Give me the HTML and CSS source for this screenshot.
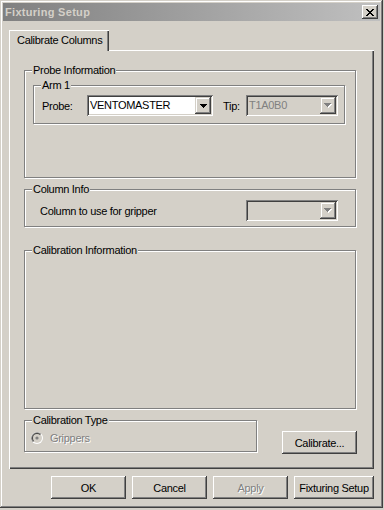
FILE: index.html
```html
<!DOCTYPE html>
<html lang="en">
<head>
  <meta charset="UTF-8">
  <title>Fixturing Setup</title>
  <link rel="stylesheet" href="styles.css">
</head>
<body>
  <div class="window">
    <div class="titlebar">
      <span class="title">Fixturing Setup</span>
      <div class="close">
        <svg width="8" height="7" viewBox="0 0 8 7"><path d="M0 0h2v1H0zM6 0h2v1H6zM1 1h2v1H1zM5 1h2v1H5zM2 2h4v1H2zM3 3h2v1H3zM2 4h4v1H2zM1 5h2v1H1zM5 5h2v1H5zM0 6h2v1H0zM6 6h2v1H6z" fill="#000"/></svg>
      </div>
    </div>

    <div class="content">
      <div class="tabs">
        <div class="tab">Calibrate Columns</div>
      </div>

      <div class="panel">
        <div class="group probe">
          <span class="legend">Probe Information</span>
          <div class="group arm">
            <span class="legend">Arm 1</span>
            <div class="arm-row">
              <span class="lbl-probe">Probe:</span>
              <div class="combo probe-combo">
                <span class="value">VENTOMASTER</span>
                <span class="drop"><svg width="7" height="4" viewBox="0 0 7 4"><path d="M0 0h7v1H0zM1 1h5v1H1zM2 2h3v1H2zM3 3h1v1H3z" fill="#000"/></svg></span>
              </div>
              <span class="lbl-tip">Tip:</span>
              <div class="combo small disabled">
                <span class="value">T1A0B0</span>
                <span class="drop"><svg width="8" height="5" viewBox="0 0 8 5"><path d="M1 1h7v1H1zM2 2h5v1H2zM3 3h3v1H3zM4 4h1v1H4z" fill="#fff"/><path d="M0 0h7v1H0zM1 1h5v1H1zM2 2h3v1H2zM3 3h1v1H3z" fill="#808080"/></svg></span>
              </div>
            </div>
          </div>
        </div>

        <div class="group column-info">
          <span class="legend">Column Info</span>
          <div class="col-row">
            <span>Column to use for gripper</span>
            <div class="combo small disabled">
              <span class="value"></span>
              <span class="drop"><svg width="8" height="5" viewBox="0 0 8 5"><path d="M1 1h7v1H1zM2 2h5v1H2zM3 3h3v1H3zM4 4h1v1H4z" fill="#fff"/><path d="M0 0h7v1H0zM1 1h5v1H1zM2 2h3v1H2zM3 3h1v1H3z" fill="#808080"/></svg></span>
            </div>
          </div>
        </div>

        <div class="group calib-info">
          <span class="legend">Calibration Information</span>
        </div>

        <div class="calib-row">
          <div class="group calib-type">
            <span class="legend">Calibration Type</span>
            <div class="radio-row">
              <svg width="12" height="12" viewBox="0 0 12 12">
                <circle cx="6" cy="6" r="6" fill="#fff"/>
                <path d="M1.76 10.24A6 6 0 0 1 10.24 1.76Z" fill="#808080"/>
                <circle cx="6" cy="6" r="5" fill="#d4d0c8"/>
                <path d="M2.46 9.54A5 5 0 0 1 9.54 2.46Z" fill="#404040"/>
                <circle cx="6" cy="6" r="4" fill="#d4d0c8"/>
                <circle cx="6" cy="6" r="1.6" fill="#808080"/>
              </svg>
              <span class="disabled-text">Grippers</span>
            </div>
          </div>
          <button class="btn calibrate">Calibrate...</button>
        </div>
      </div>

      <div class="buttons">
        <button class="btn">OK</button>
        <button class="btn">Cancel</button>
        <button class="btn disabled-text">Apply</button>
        <button class="btn wide">Fixturing Setup</button>
      </div>
    </div>
  </div>
</body>
</html>
```

FILE: styles.css
```css
* { box-sizing: border-box; }
body { margin: 0; background: #d4d0c8; font-family: "Liberation Sans", Arial, sans-serif; font-size: 11px; letter-spacing: -0.3px; color: #000; }

.window { width: 383px; height: 508px; padding: 3px; background: #d4d0c8;
  box-shadow: inset -1px -1px #404040, inset 1px 1px #d4d0c8, inset -2px -2px #808080, inset 2px 2px #fff; }

.titlebar { height: 18px; display: flex; align-items: center; justify-content: space-between; padding: 0 2px; background: linear-gradient(to right, #808080, #c0c0c0); }
.title { font-weight: bold; color: #d4d0c8; letter-spacing: 0.3px; }
.close { width: 16px; height: 14px; display: flex; align-items: center; justify-content: center; background: #d4d0c8;
  box-shadow: inset -1px -1px #404040, inset 1px 1px #fff, inset -2px -2px #808080; }

.content { padding: 9px 6px 0 6px; }

.tabs { display: flex; }
.tab { position: relative; z-index: 1; width: 100px; height: 21px; margin-bottom: -1px; padding: 0 0 1px 8px; display: flex; align-items: center; background: #d4d0c8;
  box-shadow: inset 1px 1px #fff, inset -1px 0 #404040, inset -2px 0 #808080; }

.panel { height: 419px; padding: 20px 0 0 15px;
  box-shadow: inset 1px 1px #fff, inset -1px -1px #404040, inset -2px -2px #808080; }

.group { display: flex; flex-direction: column; width: 332px; border: 1px solid #808080; box-shadow: 1px 1px #fff, inset 1px 1px #fff; }
.legend { align-self: flex-start; margin: -7px 0 -6px 7px; padding: 0 1px; line-height: 13px; background: #d4d0c8; }

.arm { width: 312px; margin: 14px 0 53px 8px; }
.arm-row { display: flex; align-items: center; height: 21px; margin: 9px 0 7px; padding-left: 8px; }
.lbl-probe { width: 45px; }
.lbl-tip { width: 23px; margin-left: 10px; }

.combo { display: flex; width: 126px; height: 21px; padding: 2px; background: #fff;
  box-shadow: inset 1px 1px #808080, inset -1px -1px #fff, inset 2px 2px #404040, inset -2px -2px #d4d0c8; }
.combo.small { width: 92px; }
.combo.disabled { background: #d4d0c8; color: #808080; }
.combo .value { flex: 1; padding-left: 1px; line-height: 17px; overflow: hidden; white-space: nowrap; }
.drop { width: 16px; height: 17px; display: flex; align-items: center; justify-content: center; background: #d4d0c8;
  box-shadow: inset -1px -1px #404040, inset 1px 1px #d4d0c8, inset -2px -2px #808080, inset 2px 2px #fff; }

.column-info { margin-top: 11px; }
.col-row { display: flex; align-items: center; justify-content: space-between; height: 21px; margin: 10px 17px 5px 15px; }

.calib-info { height: 159px; margin-top: 23px; }

.calib-row { display: flex; align-items: flex-start; margin-top: 11px; }
.calib-type { width: 233px; height: 32px; }
.radio-row { display: flex; align-items: center; gap: 7px; height: 13px; margin: 10px 0 0 6px; }
.disabled-text { color: #808080; text-shadow: 1px 1px #fff; }

.btn { height: 23px; width: 75px; padding: 0; border: 0; background: #d4d0c8; color: #000; font: inherit; letter-spacing: inherit;
  box-shadow: inset -1px -1px #404040, inset 1px 1px #fff, inset -2px -2px #808080; }
.btn.disabled-text { color: #808080; }
.calibrate { margin: 11px 0 0 25px; }

.buttons { display: flex; justify-content: flex-end; gap: 6px; margin-top: 7px; }
.btn.wide { width: 80px; }
```
